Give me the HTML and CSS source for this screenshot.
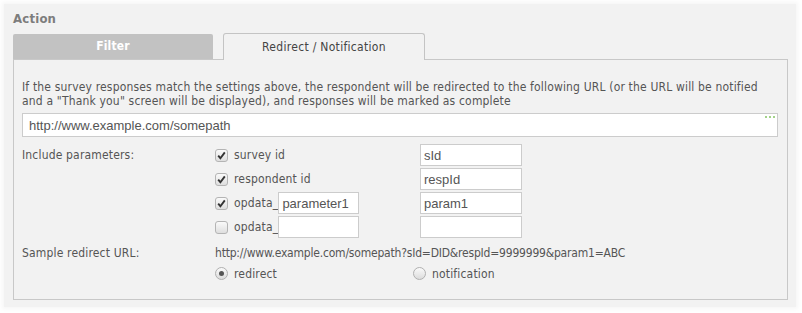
FILE: index.html
```html
<!DOCTYPE html>
<html>
<head>
<meta charset="utf-8">
<link rel="stylesheet" href="styles.css">
</head>
<body>
<div class="panel">
  <div class="title">Action</div>
  <div class="tabs">
    <div class="tab tab-off">Filter</div>
    <div class="tab tab-on">Redirect / Notification</div>
  </div>
  <div class="box">
    <p class="desc">If the survey responses match the settings above, the respondent will be redirected to the following URL (or the URL will be notified and a "Thank you" screen will be displayed), and responses will be marked as complete</p>
    <div class="url-field">
      <input class="text url" type="text" value="http://www.example.com/somepath">
      <span class="dots"></span>
    </div>
    <div class="params">
      <div class="lbl">Include parameters:</div>
      <div class="chk-cell"><span class="cb on"><svg viewBox="0 0 13 13" width="13" height="13"><path d="M3.2 6.6 L5.4 9.2 L9.8 3.4" fill="none" stroke="#333" stroke-width="1.9"/></svg></span><span class="cl">survey id</span></div>
      <div><input class="text small" type="text" value="sId"></div>

      <div></div>
      <div class="chk-cell"><span class="cb on"><svg viewBox="0 0 13 13" width="13" height="13"><path d="M3.2 6.6 L5.4 9.2 L9.8 3.4" fill="none" stroke="#333" stroke-width="1.9"/></svg></span><span class="cl">respondent id</span></div>
      <div><input class="text small" type="text" value="respId"></div>

      <div></div>
      <div class="chk-cell"><span class="cb on"><svg viewBox="0 0 13 13" width="13" height="13"><path d="M3.2 6.6 L5.4 9.2 L9.8 3.4" fill="none" stroke="#333" stroke-width="1.9"/></svg></span><span class="cl">opdata_</span><input class="text op" type="text" value="parameter1"></div>
      <div><input class="text small" type="text" value="param1"></div>

      <div></div>
      <div class="chk-cell"><span class="cb"></span><span class="cl">opdata_</span><input class="text op" type="text" value=""></div>
      <div><input class="text small" type="text" value=""></div>

      <div class="lbl sample-lbl">Sample redirect URL:</div>
      <div class="sample">http://www.example.com/somepath?sId=DID&amp;respId=9999999&amp;param1=ABC</div>

      <div></div>
      <div class="radios">
        <span class="ropt first"><span class="rb on"></span><span class="cl">redirect</span></span>
        <span class="ropt"><span class="rb"></span><span class="cl">notification</span></span>
      </div>
    </div>
  </div>
</div>
</body>
</html>
```

FILE: styles.css
```css
html, body {
  margin: 0;
  padding: 0;
  background: #ffffff;
}

body {
  font-family: "DejaVu Sans Condensed", "DejaVu Sans", sans-serif;
  font-size: 12px;
  letter-spacing: 0.17px;
  color: #555555;
}

.panel {
  margin: 4px 6px 6px 4px;
  padding: 6px 8px 7px 9px;
  background: #f2f2f2;
  box-shadow: 0 0 4px 2px #f6f6f6;
}

.title {
  font-weight: bold;
  font-size: 13px;
  letter-spacing: 0.2px;
  color: #7d7d7d;
  height: 23px;
  line-height: 17px;
}

.tabs {
  display: flex;
  gap: 10px;
  height: 27px;
  align-items: flex-end;
  position: relative;
  z-index: 1;
  margin-bottom: -1px;
}

.tab {
  width: 200px;
  text-align: center;
  box-sizing: border-box;
}

.tab-off {
  height: 25px;
  line-height: 25px;
  background: #c2c2c2;
  color: #ffffff;
  font-weight: bold;
  border-radius: 2px 2px 0 0;
  margin-bottom: 1px;
}

.tab-on {
  width: 202px;
  height: 27px;
  line-height: 26px;
  background: #f2f2f2;
  color: #444444;
  letter-spacing: 0.3px;
  border: 1px solid #c4c4c4;
  border-bottom: none;
  border-radius: 3px 3px 0 0;
}

.box {
  border: 1px solid #c8c8c8;
  padding: 20px 9px 13px 8px;
}

.desc {
  margin: 0;
  line-height: 14px;
  color: #555555;
}

.url-field {
  position: relative;
  margin-top: 5px;
}

.text {
  box-sizing: border-box;
  border: 1px solid #cccccc;
  background: #ffffff;
  font-family: "Liberation Sans", Arial, sans-serif;
  font-size: 13px;
  letter-spacing: 0;
  color: #555555;
  padding: 0 3px;
  outline: none;
  margin: 0;
}

.url {
  width: 100%;
  height: 24px;
  padding: 0 6px;
}

.dots {
  position: absolute;
  right: 3px;
  top: 3px;
  width: 10px;
  height: 2px;
  background: repeating-linear-gradient(to right, #a3d28a 0 2px, transparent 2px 4px);
}

.params {
  display: grid;
  grid-template-columns: 193px 205px 102px;
  grid-auto-rows: 22px;
  row-gap: 2px;
  margin-top: 7px;
  align-items: center;
}

.lbl {
  line-height: 22px;
}

.chk-cell {
  display: flex;
  align-items: center;
  height: 22px;
}

.cb {
  box-sizing: border-box;
  width: 13px;
  height: 13px;
  border: 1px solid #b4b4b4;
  border-radius: 3px;
  background: linear-gradient(#fafafa, #dedede);
  display: inline-flex;
  align-items: center;
  justify-content: center;
  flex: none;
}

.cb svg {
  display: block;
  margin: -1px;
}

.cl {
  margin-left: 6px;
  line-height: 22px;
}

.op {
  width: 81px;
  height: 22px;
}

.small {
  width: 102px;
  height: 22px;
  display: block;
}

.sample-lbl {
  margin-top: 3px;
}

.sample {
  grid-column: 2 / 4;
  margin-top: 3px;
  line-height: 22px;
  white-space: nowrap;
  letter-spacing: -0.2px;
}

.radios {
  grid-column: 2 / 4;
  display: flex;
  align-items: center;
  height: 22px;
  margin-top: -3px;
}

.ropt {
  display: flex;
  align-items: center;
}

.ropt.first {
  width: 198px;
}

.rb {
  box-sizing: border-box;
  width: 13px;
  height: 13px;
  border: 1px solid #b0b0b0;
  border-radius: 50%;
  background: linear-gradient(#fafafa, #dcdcdc);
  display: inline-flex;
  align-items: center;
  justify-content: center;
}

.rb.on::after {
  content: "";
  width: 5px;
  height: 5px;
  border-radius: 50%;
  background: #555555;
}
```
